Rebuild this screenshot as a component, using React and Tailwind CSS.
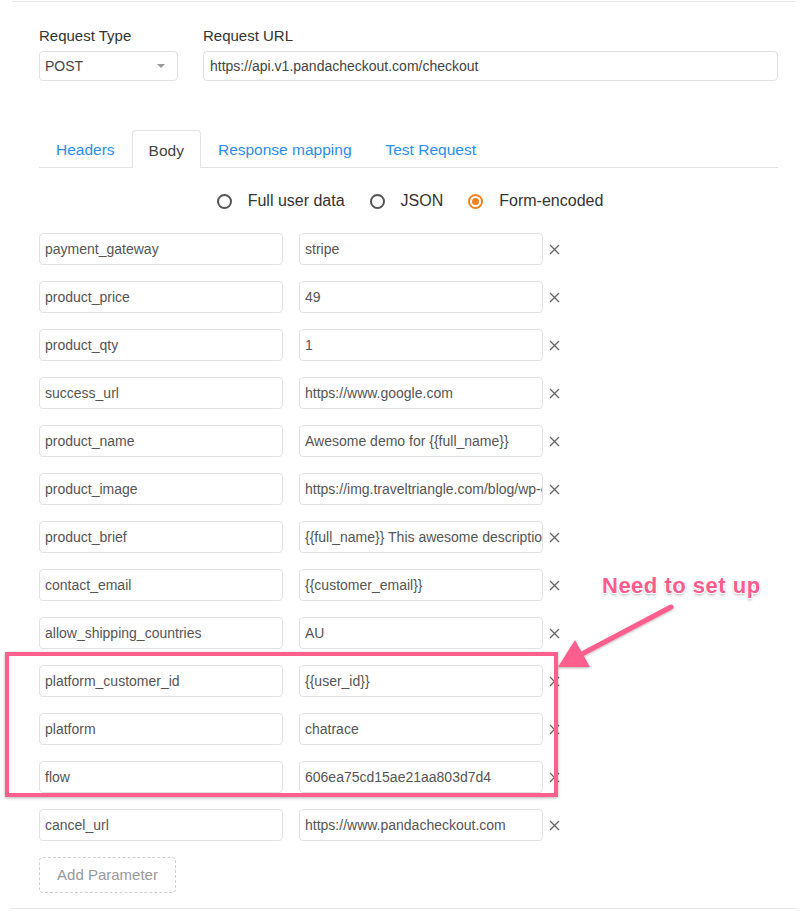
import React from "react";

const rows = [
  ["payment_gateway", "stripe"],
  ["product_price", "49"],
  ["product_qty", "1"],
  ["success_url", "https://www.google.com"],
  ["product_name", "Awesome demo for {{full_name}}"],
  ["product_image", "https://img.traveltriangle.com/blog/wp-content/uploads/2018/01/cover.jpg"],
  ["product_brief", "{{full_name}} This awesome description is for you"],
  ["contact_email", "{{customer_email}}"],
  ["allow_shipping_countries", "AU"],
  ["platform_customer_id", "{{user_id}}"],
  ["platform", "chatrace"],
  ["flow", "606ea75cd15ae21aa803d7d4"],
  ["cancel_url", "https://www.pandacheckout.com"],
];

function Field({ children, className = "" }) {
  return (
    <div
      className={
        "h-[32px] border border-[#e2e2e2] rounded-[4px] bg-white flex items-center pl-[5px] overflow-hidden whitespace-nowrap text-[14px] text-[#555] " +
        className
      }
    >
      {children}
    </div>
  );
}

function Close() {
  return (
    <svg width="11" height="11" viewBox="0 0 11 11" className="shrink-0">
      <path d="M1 1L10 10M10 1L1 10" stroke="#666" strokeWidth="1.3" />
    </svg>
  );
}

function Radio({ checked, label }) {
  return (
    <div className="flex items-center gap-[16px]">
      {checked ? (
        <span className="w-[15px] h-[15px] rounded-full border-[2px] border-[#f5821f] flex items-center justify-center">
          <span className="w-[7px] h-[7px] rounded-full bg-[#f5821f]" />
        </span>
      ) : (
        <span className="w-[15px] h-[15px] rounded-full border-[2px] border-[#555]" />
      )}
      <span className="text-[16px] text-[#333]">{label}</span>
    </div>
  );
}

export default function App() {
  return (
    <div
      className="relative w-[807px] h-[911px] overflow-hidden bg-white"
      style={{ fontFamily: '"Liberation Sans", Arial, sans-serif' }}
    >
      <div className="pt-px">
        <div className="mx-[12px] h-px bg-[#e6e6e6]" />
      </div>

      <div className="pl-[39px] w-[778px]">
        {/* Request Type / URL */}
        <div className="flex gap-[25px] pt-[25px]">
          <div className="flex flex-col gap-[6px]">
            <div className="text-[15px] leading-[18px] text-[#333]">Request Type</div>
            <div className="w-[139px] h-[30px] border border-[#e2e2e2] rounded-[4px] flex items-center justify-between pl-[5px] pr-[12px] text-[14px] text-[#444]">
              <span>POST</span>
              <span className="w-0 h-0 border-l-[4px] border-r-[4px] border-t-[4px] border-l-transparent border-r-transparent border-t-[#999]" />
            </div>
          </div>
          <div className="flex flex-col gap-[6px] flex-1">
            <div className="text-[15px] leading-[18px] text-[#333]">Request URL</div>
            <div className="h-[30px] border border-[#e2e2e2] rounded-[4px] flex items-center pl-[6px] text-[14px] text-[#444]">
              https://api.v1.pandacheckout.com/checkout
            </div>
          </div>
        </div>

        {/* Tabs */}
        <div className="mt-[49px] flex border-b border-[#e3e3e3] h-[38px]">
          <div className="px-[17px] pt-[3px] h-[37px] flex items-center text-[15.5px] text-[#2b8ef0]">Headers</div>
          <div className="px-[16px] pt-[3px] h-[38px] flex items-center text-[15.5px] text-[#444] border border-b-0 border-[#e3e3e3] rounded-t-[4px] bg-white -mb-px">Body</div>
          <div className="px-[17px] pt-[3px] h-[37px] flex items-center text-[15.5px] text-[#2b8ef0]">Response mapping</div>
          <div className="px-[17px] pt-[3px] h-[37px] flex items-center text-[15.5px] text-[#2b8ef0]">Test Request</div>
        </div>

        {/* Radios */}
        <div className="mt-[20px] h-[24px] flex items-center justify-center pl-[3px] gap-[25px] pt-[2px]">
          <Radio label="Full user data" />
          <Radio label="JSON" />
          <Radio checked label="Form-encoded" />
        </div>

        {/* Rows */}
        <div className="mt-[21px] flex flex-col gap-[16px]">
          {rows.map(([k, v]) => (
            <div key={k} className="flex items-center">
              <Field className="w-[244px]">{k}</Field>
              <Field className="w-[244px] ml-[16px]">{v}</Field>
              <div className="ml-[6px]">
                <Close />
              </div>
            </div>
          ))}
        </div>

        <div className="mt-[16px]">
          <div className="w-[137px] h-[36px] border border-dashed border-[#cfcfcf] rounded-[4px] flex items-center justify-center text-[15px] text-[#999]">
            Add Parameter
          </div>
        </div>
      </div>

      <div className="mt-[15px] mx-[10px] h-px bg-[#e6e6e6]" />

      {/* Annotation */}
      <div className="absolute left-[5px] top-[652px] w-[553px] h-[145px] border-[4px] border-[#ff5f8f] shadow-[0_1px_3px_rgba(0,0,0,0.3)]" />
      <svg className="absolute left-0 top-0" width="807" height="911" viewBox="0 0 807 911" style={{ pointerEvents: "none" }}>
        <defs>
          <filter id="sh" x="-20%" y="-20%" width="140%" height="140%">
            <feDropShadow dx="0" dy="1" stdDeviation="1.2" floodColor="#000" floodOpacity="0.3" />
          </filter>
        </defs>
        <g filter="url(#sh)">
          <line x1="671" y1="607" x2="580" y2="655" stroke="#ff5f8f" strokeWidth="5" strokeLinecap="round" />
          <polygon points="558,667 575,640 590,667" fill="#ff5f8f" />
        </g>
      </svg>
      <div className="absolute left-[602px] top-[573px] text-[22px] leading-[26px] font-bold tracking-[0.5px] text-[#ff5c8d] [text-shadow:-1px_-1px_0_#fff,1px_-1px_0_#fff,-1px_1px_0_#fff,1px_1px_0_#fff,0_2px_3px_rgba(0,0,0,0.35)]">
        Need to set up
      </div>
    </div>
  );
}
